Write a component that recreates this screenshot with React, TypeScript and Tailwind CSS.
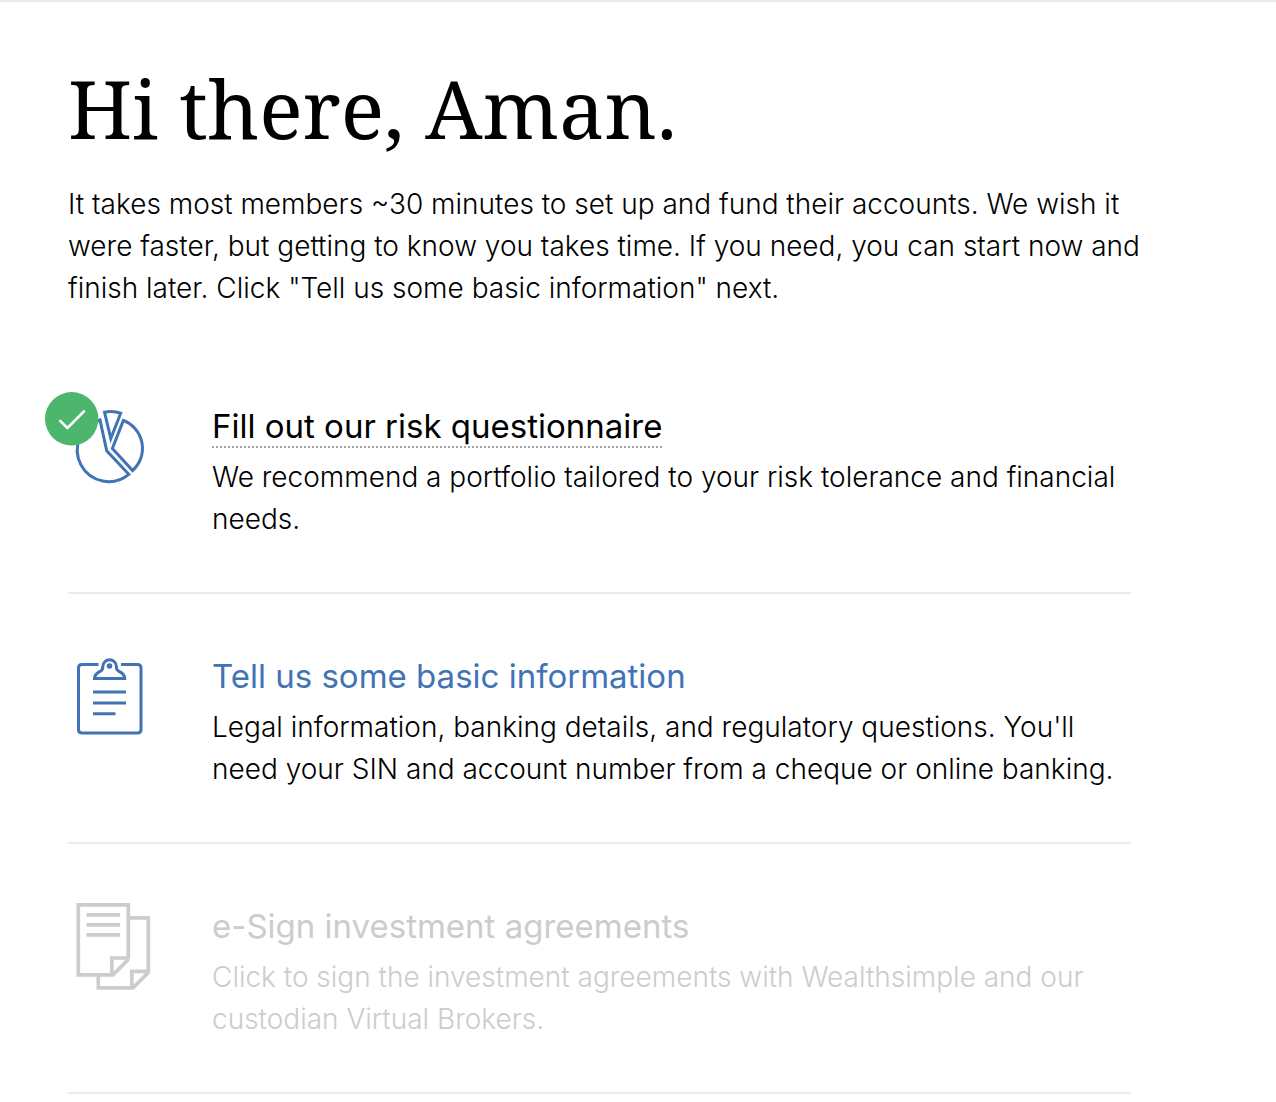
import type { ReactNode } from "react";

function PieIcon() {
  return (
    <svg className="h-[92px] w-[88px]" viewBox="68 400 88 92" fill="none" stroke="#4173b5" strokeWidth="3" aria-hidden="true">
      <path d="M100 420 L106.7 450.8 L128.8 474.3 A31.4 31.4 0 1 1 100 420 Z" />
      <path d="M123.4 420.4 L112.4 448.4 L132.6 470.6 A30 30 0 0 0 123.4 420.4 Z" />
      <path d="M104.5 412.2 Q112.5 410.2 120.7 413.2 L110.8 438.5 Z" />
    </svg>
  );
}

function ClipboardIcon() {
  return (
    <svg className="h-[92px] w-[88px]" viewBox="68 650 88 92" fill="none" stroke="#4173b5" strokeWidth="3" aria-hidden="true">
      <path d="M98.5 664.5 H82 Q78.5 664.5 78.5 668 V729.5 Q78.5 733 82 733 H137.5 Q141 733 141 729.5 V668 Q141 664.5 137.5 664.5 H121" />
      <path d="M94.5 678.5 Q95 673.5 100 671.5 Q103 670 102.8 666.5 A6.8 6.8 0 0 1 116.400 666.5 Q116.2 670 119.2 671.5 Q124.2 673.5 124.7 678.5 Z" />
      <circle cx="109.5" cy="666" r="2.8" fill="#4173b5" stroke="none" />
      <path d="M93 692 H126 M93 703 H126 M93 713.7 H115.5" />
    </svg>
  );
}

function DocumentsIcon() {
  return (
    <svg className="h-[92px] w-[88px]" viewBox="68 900 88 92" fill="none" stroke="#cccccc" strokeWidth="3.7" aria-hidden="true">
      <path d="M128.3 959.5 V904.8 H78.3 V974.8 H113 L128.3 959.5 M128.3 958 H111.8 V974.8" />
      <path d="M130 917.8 H148.3 V972.5 L133 987.8 H98.3 V976 M148.3 971.3 H131.8 V987.8" />
      <path d="M86.5 914.8 H120 M86.5 924.8 H120 M86.5 934.8 H120" />
    </svg>
  );
}

function DoneBadge() {
  return (
    <svg className="absolute -top-2 -left-[23px] size-[54px]" viewBox="0 0 54 54" role="img" aria-label="Completed">
      <circle cx="26.7" cy="26.8" r="26.7" fill="#4cb66d" />
      <path d="M15.2 28.8 L22.4 36 L39 19.4" fill="none" stroke="#fff" strokeWidth="2.6" strokeLinecap="round" strokeLinejoin="round" />
    </svg>
  );
}

function Step({ icon, done, muted, title, children }: { icon: ReactNode; done?: boolean; muted?: boolean; title: ReactNode; children: ReactNode }) {
  return (
    <li className={`flex border-b-2 border-[#ebebeb] pt-14 pb-[52px] ${muted ? "text-[#cccccc]" : "text-black"}`}>
      <div className="relative w-36 shrink-0">
        {icon}
        {done && <DoneBadge />}
      </div>
      <div className="min-w-0 flex-1">
        <h2 className="text-[33px] leading-[52px]">{title}</h2>
        <p className="mt-1 text-[28px] leading-[42px] font-light">{children}</p>
      </div>
    </li>
  );
}

export default function App() {
  return (
    <main className="border-t-2 border-[#ebebeb] bg-white pr-[145px] pl-[68px] font-[Inter,sans-serif] text-black">
      <h1 className="pt-14 font-['Noto_Serif','Liberation_Serif',serif] text-[81px] leading-[100px]">Hi there, Aman.</h1>
      <p className="mt-[25px] -mr-4 text-[28px] leading-[42px] font-light">
        It takes most members ~30 minutes to set up and fund their accounts. We wish it were faster, but getting to know you takes time. If you need, you can start now and finish later. Click "Tell us some basic information" next.
      </p>
      <ul className="mt-[35px]">
        <Step
          done
          icon={<PieIcon />}
          title={<a href="#risk" className="border-b-2 border-dotted border-[#a3a3a3]">Fill out our risk questionnaire</a>}
        >
          We recommend a portfolio tailored to your risk tolerance and financial needs.
        </Step>
        <Step icon={<ClipboardIcon />} title={<a href="#basic" className="text-[#4173b5]">Tell us some basic information</a>}>
          Legal information, banking details, and regulatory questions. You'll need your SIN and account number from a cheque or online banking.
        </Step>
        <Step muted icon={<DocumentsIcon />} title="e-Sign investment agreements">
          Click to sign the investment agreements with Wealthsimple and our custodian Virtual Brokers.
        </Step>
      </ul>
    </main>
  );
}
